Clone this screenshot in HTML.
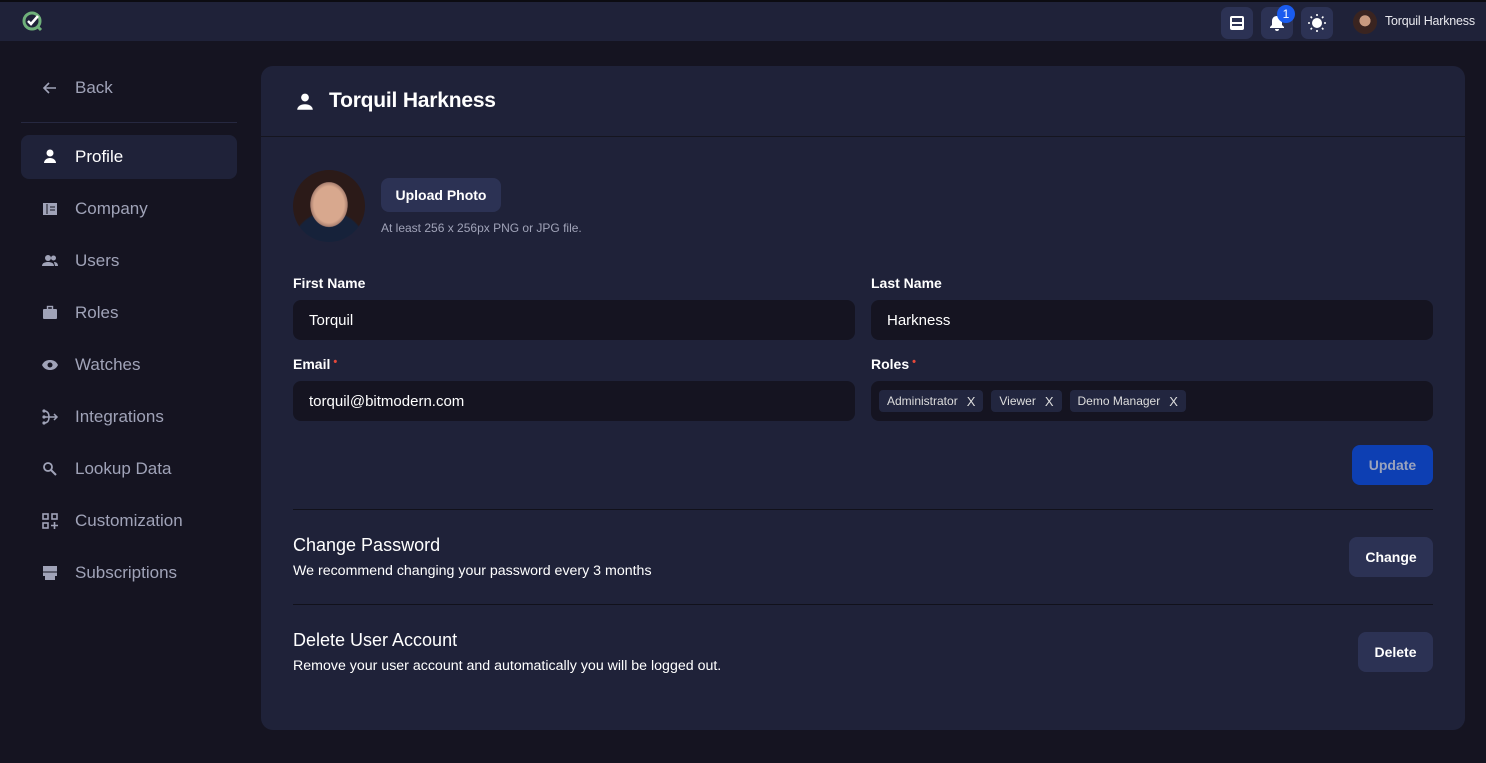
<!DOCTYPE html>
<html><head><meta charset="utf-8"><style>
*{box-sizing:border-box;margin:0;padding:0}
body{width:1486px;height:763px;background:#151421;font-family:"Liberation Sans",sans-serif;color:#fff;position:relative;overflow:hidden}
.top{position:absolute;left:0;top:0;width:1486px;height:41px;background:#1f2239;border-top:2px solid #0c0c12}
.ib{position:absolute;top:5px;width:32px;height:32px;border-radius:7px;background:#2c3254}
.side a{position:absolute;left:21px;width:216px;height:44px;border-radius:8px;display:flex;align-items:center;color:#a0a3b8;font-size:17px;text-decoration:none}
.side a svg{position:absolute;left:20px}
.side a span{position:absolute;left:54px}
.card{position:absolute;left:261px;top:66px;width:1204px;height:664px;background:#1f2239;border-radius:12px}
.lbl{position:absolute;font-weight:bold;font-size:14px}
.lbl i{color:#e5483a;font-style:normal;font-size:11px;vertical-align:top;margin-left:3px}
.inp{position:absolute;height:40px;width:562px;background:#151421;border-radius:8px;font-size:15px;padding:0 16px;display:flex;align-items:center}
.tag{display:inline-flex;align-items:center;height:22px;background:#22263f;border-radius:4px;padding:0 8px;font-size:12px;color:#ddd;margin-right:8px}
.tag b{font-weight:normal;margin-left:9px;font-size:13px}
.btn{position:absolute;background:#2c3254;border-radius:8px;font-weight:bold;font-size:14px;display:flex;align-items:center;justify-content:center}
.hr{position:absolute;left:32px;width:1140px;height:1px;background:#11111b}
</style></head><body>
<div class="top">
<svg style="position:absolute;left:22px;top:9px" width="22" height="22" viewBox="0 0 22 22"><circle cx="10" cy="10" r="8" fill="none" stroke="#6fb07a" stroke-width="3"/><path d="M15 15l4 4" stroke="#6fb07a" stroke-width="3"/><path d="M6 10l3 3 7-8" fill="none" stroke="#fff" stroke-width="2.5"/></svg>
<div class="ib" style="left:1221px"><svg style="margin:8px" width="16" height="16" viewBox="0 0 16 16"><rect x="1" y="1" width="14" height="14" rx="2" fill="#fff"/><rect x="3" y="3" width="10" height="4" fill="#2c3254"/><rect x="3" y="9" width="10" height="2" fill="#2c3254"/></svg></div>
<div class="ib" style="left:1261px"><svg style="margin:7px" width="18" height="18" viewBox="0 0 18 18"><path d="M9 2c-3 0-5 2-5 5v4l-2 2v1h14v-1l-2-2V7c0-3-2-5-5-5z M7 15h4a2 2 0 0 1-4 0z" fill="#fff"/></svg></div>
<div style="position:absolute;left:1277px;top:3px;width:18px;height:18px;border-radius:50%;background:#1a5cf0;font-size:12px;text-align:center;line-height:18px">1</div>
<div class="ib" style="left:1301px"><svg style="margin:6px" width="20" height="20" viewBox="0 0 20 20"><circle cx="10" cy="10" r="5" fill="#fff"/><g stroke="#fff" stroke-width="1.6"><path d="M10 1v2M10 17v2M1 10h2M17 10h2M3.6 3.6l1.4 1.4M15 15l1.4 1.4M3.6 16.4L5 15M15 5l1.4-1.4"/></g></svg></div>
<div style="position:absolute;left:1353px;top:8px;width:24px;height:24px;border-radius:50%;background:radial-gradient(circle at 50% 45%,#c99a80 0 30%,#3a2420 32%)"></div>
<div style="position:absolute;left:1385px;top:12px;font-size:12.5px;color:#e8e8ee;letter-spacing:-0.2px">Torquil Harkness</div>
</div>
<div class="side">
<a style="top:66px"><svg width="18" height="18" viewBox="0 0 18 18"><path d="M15 9H4M8 4L3 9l5 5" fill="none" stroke="#a0a3b8" stroke-width="1.6"/></svg><span>Back</span></a>
<div style="position:absolute;left:21px;top:122px;width:216px;height:1px;background:#262840"></div>
<a style="top:135px;background:#1f2239;color:#fff"><svg width="18" height="18" viewBox="0 0 18 18"><circle cx="9" cy="5" r="3.5" fill="#fff"/><path d="M3 15c0-3 3-5 6-5s6 2 6 5z" fill="#fff"/></svg><span>Profile</span></a>
<a style="top:187px"><svg width="18" height="18" viewBox="0 0 18 18"><rect x="2" y="3" width="14" height="12" fill="#a0a3b8"/><path d="M6 4v10M9 7h5M9 10h5" stroke="#151421"/></svg><span>Company</span></a>
<a style="top:239px"><svg width="18" height="18" viewBox="0 0 18 18"><circle cx="7" cy="6" r="3" fill="#a0a3b8"/><circle cx="12.5" cy="6" r="2.5" fill="#a0a3b8"/><path d="M1 14c0-3 3-4 6-4s6 1 6 4zM13 10c2 0 4 1 4 4h-3z" fill="#a0a3b8"/></svg><span>Users</span></a>
<a style="top:291px"><svg width="18" height="18" viewBox="0 0 18 18"><rect x="2" y="5" width="14" height="10" rx="1" fill="#a0a3b8"/><rect x="6.5" y="2.5" width="5" height="3" fill="none" stroke="#a0a3b8" stroke-width="1.4"/></svg><span>Roles</span></a>
<a style="top:343px"><svg width="18" height="18" viewBox="0 0 18 18"><path d="M1 9c2-4 5-5 8-5s6 1 8 5c-2 4-5 5-8 5s-6-1-8-5z" fill="#a0a3b8"/><circle cx="9" cy="9" r="2.5" fill="#151421"/></svg><span>Watches</span></a>
<a style="top:395px"><svg width="18" height="18" viewBox="0 0 18 18"><path d="M3 3c4 0 5 3 5 6s-1 6-5 6M3 9h13M13 6l3 3-3 3" fill="none" stroke="#a0a3b8" stroke-width="1.5"/><circle cx="3" cy="3" r="1.6" fill="#a0a3b8"/><circle cx="3" cy="9" r="1.6" fill="#a0a3b8"/><circle cx="3" cy="15" r="1.6" fill="#a0a3b8"/></svg><span>Integrations</span></a>
<a style="top:447px"><svg width="18" height="18" viewBox="0 0 18 18"><circle cx="7" cy="7" r="4" fill="none" stroke="#a0a3b8" stroke-width="1.8"/><path d="M10 10l5 5" stroke="#a0a3b8" stroke-width="2"/></svg><span>Lookup Data</span></a>
<a style="top:499px"><svg width="18" height="18" viewBox="0 0 18 18"><g fill="none" stroke="#a0a3b8" stroke-width="1.6"><rect x="2" y="2" width="5" height="5"/><rect x="11" y="2" width="5" height="5"/><rect x="2" y="11" width="5" height="5"/><path d="M13.5 10v7M10 13.5h7"/></g></svg><span>Customization</span></a>
<a style="top:551px"><svg width="18" height="18" viewBox="0 0 18 18"><rect x="2" y="2" width="14" height="10" fill="#a0a3b8"/><rect x="4" y="12" width="10" height="4" fill="#a0a3b8"/><path d="M2 8h14" stroke="#151421"/></svg><span>Subscriptions</span></a>
</div>
<div class="card">
<svg style="position:absolute;left:34px;top:26px" width="20" height="20" viewBox="0 0 18 18"><circle cx="9" cy="5" r="3.5" fill="#fff"/><path d="M2 16c0-3 3-5 7-5s7 2 7 5z" fill="#fff"/></svg>
<div style="position:absolute;left:68px;top:23px;font-size:21px;font-weight:bold;letter-spacing:-0.2px">Torquil Harkness</div>
<div style="position:absolute;left:0;top:70px;width:1204px;height:1px;background:#15151f"></div>
<div style="position:absolute;left:32px;top:104px;width:72px;height:72px;border-radius:50%;background:radial-gradient(ellipse 30% 36% at 50% 48%,#d8a88e 0 70%,#aa8070 85%,transparent 88%),radial-gradient(circle at 50% 110%,#16223a 0 42%,transparent 44%),#2b1a18"></div>
<div class="btn" style="left:120px;top:112px;width:120px;height:34px">Upload Photo</div>
<div style="position:absolute;left:120px;top:155px;font-size:12px;color:#a0a3b8">At least 256 x 256px PNG or JPG file.</div>
<div class="lbl" style="left:32px;top:209px">First Name</div>
<div class="lbl" style="left:610px;top:209px">Last Name</div>
<div class="inp" style="left:32px;top:234px">Torquil</div>
<div class="inp" style="left:610px;top:234px">Harkness</div>
<div class="lbl" style="left:32px;top:290px">Email<i>•</i></div>
<div class="lbl" style="left:610px;top:290px">Roles<i>•</i></div>
<div class="inp" style="left:32px;top:315px">torquil@bitmodern.com</div>
<div class="inp" style="left:610px;top:315px;padding-left:8px"><span class="tag">Administrator<b>X</b></span><span class="tag">Viewer<b>X</b></span><span class="tag">Demo Manager<b>X</b></span></div>
<div class="btn" style="left:1091px;top:379px;width:81px;height:40px;background:#0d3fb3;color:#9aa3bd">Update</div>
<div class="hr" style="top:443px"></div>
<div style="position:absolute;left:32px;top:469px;font-size:18px">Change Password</div>
<div style="position:absolute;left:32px;top:497px;font-size:14.2px">We recommend changing your password every 3 months</div>
<div class="btn" style="left:1088px;top:471px;width:84px;height:40px">Change</div>
<div class="hr" style="top:538px"></div>
<div style="position:absolute;left:32px;top:564px;font-size:18px">Delete User Account</div>
<div style="position:absolute;left:32px;top:592px;font-size:14.2px">Remove your user account and automatically you will be logged out.</div>
<div class="btn" style="left:1097px;top:566px;width:75px;height:40px">Delete</div>
</div>
</body></html>
